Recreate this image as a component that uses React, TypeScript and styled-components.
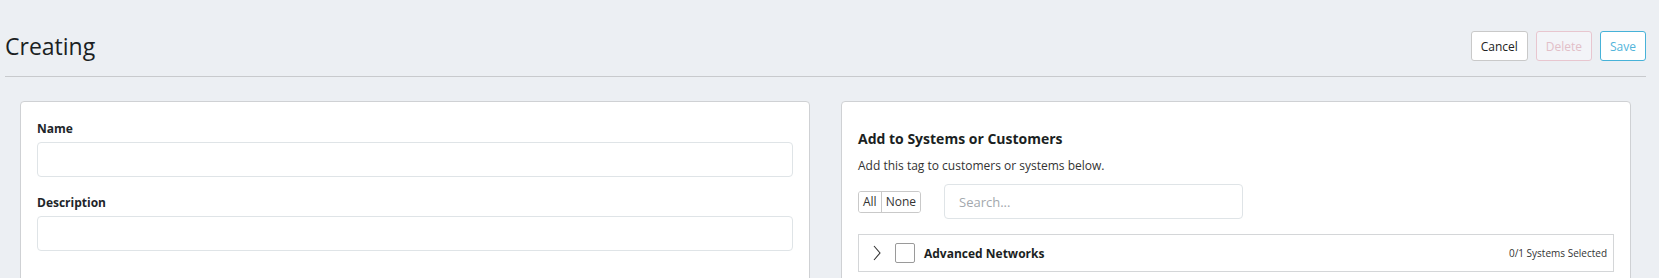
import React, { useState } from 'react';
import styled, { createGlobalStyle } from 'styled-components';

const GlobalStyle = createGlobalStyle`
  html, body {
    margin: 0;
    padding: 0;
    background: #eceff3;
    font-family: "Segoe UI", "Open Sans", "Noto Sans", sans-serif;
    color: #212529;
  }
  * {
    box-sizing: border-box;
  }
`;

type Network = {
  name: string;
  selected: number;
  total: number;
};

const networks: Network[] = [{ name: 'Advanced Networks', selected: 0, total: 1 }];

const App: React.FC = () => {
  const [name, setName] = useState('');
  const [description, setDescription] = useState('');
  const [search, setSearch] = useState('');

  return (
    <>
      <GlobalStyle />
      <Page>
        <Header>
          <Title>Creating</Title>
          <Actions>
            <ActionButton variant="default">Cancel</ActionButton>
            <ActionButton variant="danger" disabled>
              Delete
            </ActionButton>
            <ActionButton variant="primary">Save</ActionButton>
          </Actions>
        </Header>

        <Columns>
          <Card pad="form">
            <Field>
              <Label>Name</Label>
              <Input value={name} onChange={(e) => setName(e.target.value)} />
            </Field>
            <Field>
              <Label>Description</Label>
              <Input value={description} onChange={(e) => setDescription(e.target.value)} />
            </Field>
          </Card>

          <Card pad="section">
            <SectionTitle>Add to Systems or Customers</SectionTitle>
            <SectionHint>Add this tag to customers or systems below.</SectionHint>
            <Toolbar>
              <ToggleGroup>
                <ToggleButton>All</ToggleButton>
                <ToggleButton>None</ToggleButton>
              </ToggleGroup>
              <SearchInput placeholder="Search..." value={search} onChange={(e) => setSearch(e.target.value)} />
            </Toolbar>
            {networks.map((n) => (
              <TreeRow key={n.name}>
                <Chevron viewBox="0 0 8 16" aria-hidden>
                  <path d="M1 1 L7 8 L1 15" fill="none" stroke="#333" strokeWidth="1.1" />
                </Chevron>
                <Checkbox />
                <RowName>{n.name}</RowName>
                <RowCount>
                  {n.selected}/{n.total} Systems Selected
                </RowCount>
              </TreeRow>
            ))}
          </Card>
        </Columns>
      </Page>
    </>
  );
};

export default App;

const Page = styled.div`
  padding: 0 13px 0 5px;
`;

const Header = styled.header`
  display: flex;
  align-items: center;
  justify-content: space-between;
  padding: 31px 0 15px;
  border-bottom: 1px solid #c8cacd;
`;

const Title = styled.h1`
  margin: 0;
  font-size: 23px;
  font-weight: 400;
  color: #1b1f23;
  line-height: 30px;
`;

const Actions = styled.div`
  display: flex;
  gap: 8px;
`;

const buttonColors = {
  default: { bg: '#ffffff', border: '#c9c9c9', color: '#222' },
  danger: { bg: '#f3f4f8', border: '#e8c6cf', color: '#e2bfc8' },
  primary: { bg: '#ffffff', border: '#47b2d8', color: '#52b5db' },
};

const ActionButton = styled.button<{ variant: keyof typeof buttonColors }>`
  height: 30px;
  padding: 0 9px;
  font-family: inherit;
  font-size: 12px;
  border-radius: 3px;
  border: 1px solid ${(p) => buttonColors[p.variant].border};
  background: ${(p) => buttonColors[p.variant].bg};
  color: ${(p) => buttonColors[p.variant].color};
  cursor: pointer;
  &:disabled {
    cursor: default;
  }
`;

const Columns = styled.div`
  display: grid;
  grid-template-columns: 1fr 1fr;
  gap: 31px;
  padding: 24px 15px 0;
`;

const Card = styled.section<{ pad: 'form' | 'section' }>`
  background: #fff;
  border: 1px solid #cfd1d4;
  border-radius: 4px;
  padding: ${(p) => (p.pad === 'section' ? '27px 16px 30px' : '18px 16px 30px')};
  min-height: 200px;
`;

const Field = styled.div`
  display: flex;
  flex-direction: column;
  margin-bottom: 17px;
`;

const Label = styled.label`
  font-size: 12px;
  font-weight: 700;
  line-height: 17px;
  margin-bottom: 5px;
  color: #212529;
`;

const Input = styled.input`
  height: 35px;
  border: 1px solid #dfe4e7;
  border-radius: 4px;
  padding: 0 12px;
  font-family: inherit;
  font-size: 13px;
  outline: none;
`;

const SectionTitle = styled.h3`
  margin: 0;
  font-size: 14px;
  font-weight: 700;
  line-height: 20px;
  color: #1b1f23;
`;

const SectionHint = styled.p`
  margin: 8px 0 10px;
  font-size: 12px;
  line-height: 17px;
  color: #333;
`;

const Toolbar = styled.div`
  display: flex;
  align-items: center;
  gap: 23px;
  margin-bottom: 15px;
`;

const ToggleGroup = styled.div`
  display: flex;
  height: 22px;
  border: 1px solid #c9c9c9;
  border-radius: 3px;
  overflow: hidden;
`;

const ToggleButton = styled.button`
  border: none;
  background: #fff;
  font-family: inherit;
  font-size: 12px;
  color: #333;
  padding: 0 4px;
  cursor: pointer;
  & + & {
    border-left: 1px solid #c9c9c9;
  }
`;

const SearchInput = styled.input`
  width: 299px;
  height: 35px;
  border: 1px solid #dfe4e7;
  border-radius: 4px;
  padding: 0 14px;
  font-family: inherit;
  font-size: 13px;
  outline: none;
  &::placeholder {
    color: #a3a8ad;
  }
`;

const TreeRow = styled.div`
  display: flex;
  align-items: center;
  height: 38px;
  border: 1px solid #d4d6d8;
  padding: 0 6px 0 14px;
`;

const Chevron = styled.svg`
  width: 8px;
  height: 16px;
  flex: none;
`;

const Checkbox = styled.span`
  width: 20px;
  height: 20px;
  margin-left: 14px;
  border: 1px solid #9a9a9a;
  border-radius: 2px;
  flex: none;
`;

const RowName = styled.span`
  margin-left: 9px;
  font-size: 12px;
  font-weight: 700;
  color: #1b1f23;
`;

const RowCount = styled.span`
  margin-left: auto;
  font-size: 10px;
  color: #333;
`;
